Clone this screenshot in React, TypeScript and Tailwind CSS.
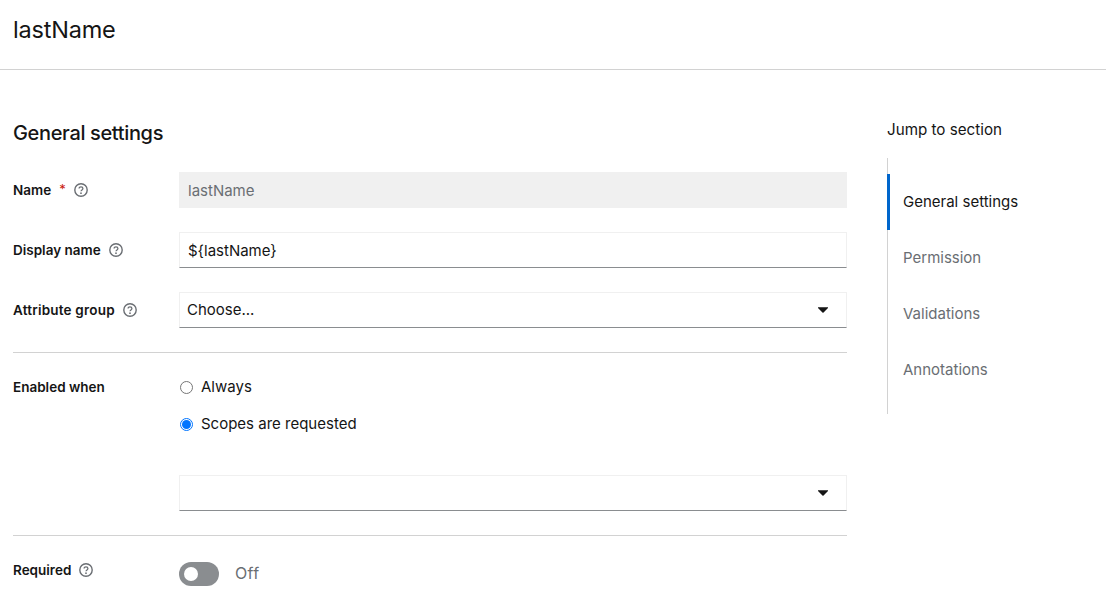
import React from 'react';

function HelpIcon() {
  return (
    <svg viewBox="0 0 14 14" className="h-[14px] w-[14px] shrink-0 text-[#6a6e73]" fill="none" stroke="currentColor">
      <circle cx="7" cy="7" r="6.2" strokeWidth="1.4" />
      <path d="M5.1 5.6c0-1.1.8-1.8 1.9-1.8s1.9.7 1.9 1.7c0 1.4-1.9 1.4-1.9 2.8" strokeWidth="1.3" />
      <circle cx="7" cy="10.2" r=".85" fill="currentColor" stroke="none" />
    </svg>
  );
}

function Caret() {
  return (
    <svg viewBox="0 0 10 6" className="h-[6px] w-[10px] text-[#151515]" fill="currentColor">
      <path d="M0 0.3h10c.3 0 .4.3.2.5L5.3 5.7c-.2.2-.4.2-.6 0L-.2.8C-.4.6-.3.3 0 .3z" />
    </svg>
  );
}

function Label({ text, required }: { text: string; required?: boolean }) {
  return (
    <div className="flex items-center text-[13.5px] font-semibold text-[#151515]">
      <span>{text}</span>
      {required && <span className="ml-2 text-[13px] font-normal text-[#c9190b]">*</span>}
      <span className="ml-2">
        <HelpIcon />
      </span>
    </div>
  );
}

function SelectBox({ value }: { value?: string }) {
  return (
    <div className="flex h-9 w-full items-center justify-between border border-[#f0f0f0] border-b-[#8a8d90] pl-[7px] pr-[18px] text-[15px] text-[#151515]">
      <span>{value}</span>
      <Caret />
    </div>
  );
}

function Radio({ label, checked }: { label: string; checked?: boolean }) {
  return (
    <div className="flex h-[21px] items-center gap-[8px] pl-px text-[15px] text-[#151515]">
      {checked ? (
        <span className="flex h-[13px] w-[13px] items-center justify-center rounded-full border border-[#0075ff]">
          <span className="h-[9px] w-[9px] rounded-full bg-[#0075ff]" />
        </span>
      ) : (
        <span className="h-[13px] w-[13px] rounded-full border border-[#767676]" />
      )}
      <span>{label}</span>
    </div>
  );
}

const sections = ['General settings', 'Permission', 'Validations', 'Annotations'];

export default function App() {
  return (
    <div className="h-[606px] w-[1106px] overflow-hidden bg-white font-['Inter',sans-serif]">
      <header className="flex h-[70px] items-center border-b border-[#d2d2d2] pb-[10px] pl-[13px]">
        <h1 className="text-[23.5px] tracking-[-0.2px] text-[#151515]">lastName</h1>
      </header>

      <div className="flex">
        <main className="w-[847px] pl-[13px]">
          <h2 className="mt-[49px] h-[28px] text-[20px] font-medium leading-[28px] tracking-[-0.35px] text-[#151515]">General settings</h2>

          <div className="mt-[25px] grid grid-cols-[166px_1fr] items-center gap-y-6">
            <Label text="Name" required />
            <div className="flex h-9 items-center bg-[#f0f0f0] px-[9px] pt-[2px] text-[15px] text-[#6a6e73]">lastName</div>

            <Label text="Display name" />
            <div className="flex h-9 items-center border border-[#f0f0f0] border-b-[#8a8d90] px-2 pt-[2px] text-[15px] text-[#151515]">{'${lastName}'}</div>

            <div className="tracking-[0.2px]">
              <Label text="Attribute group" />
            </div>
            <SelectBox value="Choose..." />
          </div>

          <hr className="mt-6 border-[#d2d2d2]" />

          <div className="mt-6 grid grid-cols-[166px_1fr]">
            <div className="text-[13.5px] font-semibold leading-[21px] text-[#151515]">Enabled when</div>
            <div>
              <Radio label="Always" />
              <div className="mt-4">
                <Radio label="Scopes are requested" checked />
              </div>
              <div className="mt-10">
                <SelectBox />
              </div>
            </div>
          </div>

          <hr className="mt-6 border-[#d2d2d2]" />

          <div className="mt-[25px] grid grid-cols-[166px_1fr] items-start">
            <div className="-mt-px">
              <Label text="Required" />
            </div>
            <div className="flex items-center gap-4">
              <span className="flex h-6 w-10 items-center rounded-full bg-[#8a8d90] pl-[5px]">
                <span className="h-[14px] w-[14px] rounded-full bg-white" />
              </span>
              <span className="pb-[2px] text-[16px] tracking-[0.3px] text-[#6a6e73]">Off</span>
            </div>
          </div>
        </main>

        <aside className="ml-10 mt-[49px] w-[219px]">
          <div className="h-[22px] text-[15.2px] leading-[21px] text-[#151515]">Jump to section</div>
          <nav className="mt-[17px] border-l border-[#d2d2d2] py-4">
            {sections.map((s, i) => (
              <div
                key={s}
                className={`-ml-px flex h-14 items-center border-l-[3px] pl-[13px] text-[15px] ${i === 0 ? 'border-[#06c] text-[#151515]' : 'border-transparent text-[#6a6e73]'}`}
              >
                {s}
              </div>
            ))}
          </nav>
        </aside>
      </div>
    </div>
  );
}
